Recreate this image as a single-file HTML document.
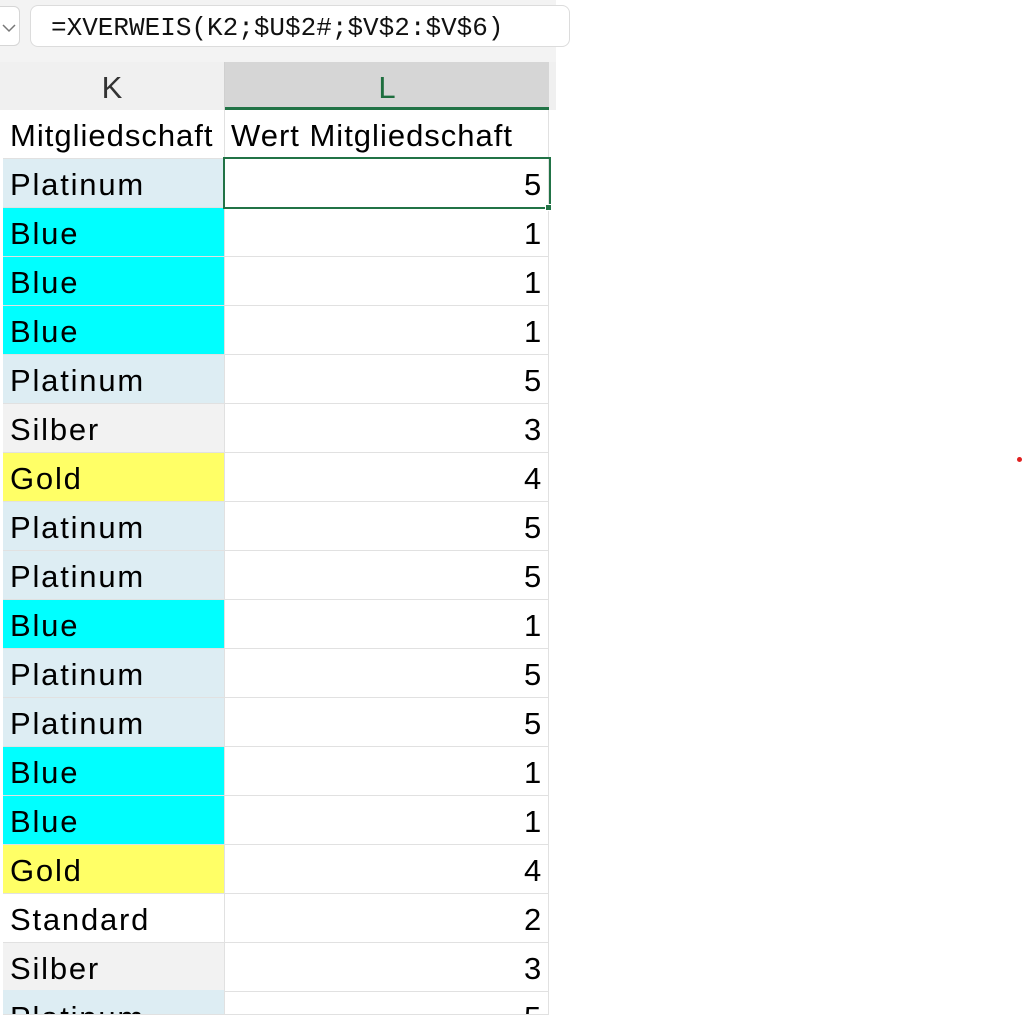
<!DOCTYPE html>
<html><head><meta charset="utf-8"><style>
*{margin:0;padding:0;box-sizing:border-box}
html,body{width:1024px;height:1015px;overflow:hidden}
body{background:#fff;position:relative;font-family:"Liberation Sans",sans-serif}
.top{position:absolute;left:0;top:0;width:556px;height:62px;background:#f3f3f3}
.nb{position:absolute;left:-10px;top:6px;width:30px;height:40px;background:#fff;border:1px solid #d6d6d6;border-radius:6px}
.fx{position:absolute;left:30px;top:5px;width:540px;height:42px;background:#fff;border:1px solid #dcdcdc;border-radius:8px;font-family:"Liberation Mono",monospace;font-size:26px;line-height:44px;padding-left:20px;color:#111;white-space:nowrap;overflow:hidden}
.hdr{position:absolute;top:62px;height:48px;font-size:31px;line-height:52px;text-align:center;color:#333}
.c{position:absolute;height:49px;font-size:31px;letter-spacing:1.8px;line-height:52px;color:#000;border-bottom:1px solid #e1e1e1;overflow:hidden;white-space:nowrap}
.k{left:3px;width:222px;padding-left:7px;border-right:1px solid #e1e1e1}
.l{left:225px;width:324px;text-align:right;padding-right:5px;border-right:1px solid #e1e1e1}
.P{background:#ddedf3}.B{background:#00ffff}.S{background:#f2f2f2}.G{background:#ffff66}.W{background:#fff}
</style></head><body>
<div class="top"><div class="nb"><svg width="14" height="10" style="position:absolute;left:11px;top:16px" viewBox="0 0 14 10"><path d="M1 2l6 6 6-6" fill="none" stroke="#777" stroke-width="1.5"/></svg></div>
<div class="fx">=XVERWEIS(K2;$U$2#;$V$2:$V$6)</div></div>
<div class="hdr" style="left:0;width:225px;background:#f0f0f0;border-right:1px solid #d0d0d0">K</div>
<div class="hdr" style="left:225px;width:324px;background:#d6d6d6;color:#1e6e3e;border-bottom:3px solid #217346">L</div>
<div class="hdr" style="left:549px;width:7px;background:#f0f0f0"></div>
<div class="c k W" style="top:110px;letter-spacing:1px">Mitgliedschaft</div><div class="c l" style="top:110px;text-align:left;padding-left:6px;letter-spacing:1px">Wert Mitgliedschaft</div>
<div class="c k P" style="top:159px">Platinum</div><div class="c l" style="top:159px">5</div>
<div class="c k B" style="top:208px">Blue</div><div class="c l" style="top:208px">1</div>
<div class="c k B" style="top:257px">Blue</div><div class="c l" style="top:257px">1</div>
<div class="c k B" style="top:306px">Blue</div><div class="c l" style="top:306px">1</div>
<div class="c k P" style="top:355px">Platinum</div><div class="c l" style="top:355px">5</div>
<div class="c k S" style="top:404px">Silber</div><div class="c l" style="top:404px">3</div>
<div class="c k G" style="top:453px">Gold</div><div class="c l" style="top:453px">4</div>
<div class="c k P" style="top:502px">Platinum</div><div class="c l" style="top:502px">5</div>
<div class="c k P" style="top:551px">Platinum</div><div class="c l" style="top:551px">5</div>
<div class="c k B" style="top:600px">Blue</div><div class="c l" style="top:600px">1</div>
<div class="c k P" style="top:649px">Platinum</div><div class="c l" style="top:649px">5</div>
<div class="c k P" style="top:698px">Platinum</div><div class="c l" style="top:698px">5</div>
<div class="c k B" style="top:747px">Blue</div><div class="c l" style="top:747px">1</div>
<div class="c k B" style="top:796px">Blue</div><div class="c l" style="top:796px">1</div>
<div class="c k G" style="top:845px">Gold</div><div class="c l" style="top:845px">4</div>
<div class="c k W" style="top:894px">Standard</div><div class="c l" style="top:894px">2</div>
<div class="c k S" style="top:943px">Silber</div><div class="c l" style="top:943px">3</div>
<div class="c k P" style="top:990px;line-height:56px;height:25px">Platinum</div><div class="c l" style="top:990px;line-height:56px;height:25px">5</div>
<div style="position:absolute;left:223px;top:157px;width:328px;height:52px;border:2px solid #217346"></div>
<div style="position:absolute;left:545px;top:204px;width:7px;height:7px;background:#217346;border:1px solid #fff"></div>
<div style="position:absolute;left:1017px;top:457px;width:5px;height:5px;border-radius:50%;background:#e02020"></div>
</body></html>
